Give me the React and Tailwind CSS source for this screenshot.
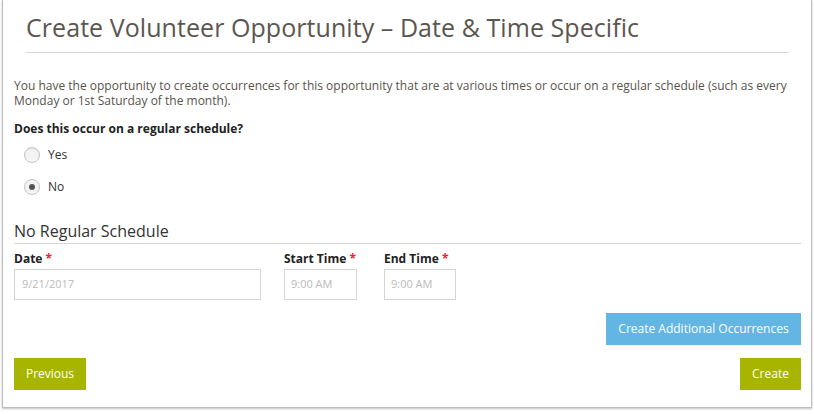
export default function App() {
  const body = { fontFamily: '"Open Sans", "DejaVu Sans", sans-serif' };
  return (
    <div className="w-[814px] h-[414px] bg-white overflow-hidden">
      <div className="ml-[2px] w-[810px] h-[408px] bg-white border-x border-b border-[#bdbdbd] shadow-[0_1px_2px_rgba(0,0,0,0.25)] relative" style={body}>
        <div className="pl-[23px] pr-[22px] pt-[11px]">
          <h1 className="text-[25px] leading-[32px] text-[#5c5650] tracking-[0.06px]">
            Create Volunteer Opportunity – Date &amp; Time Specific
          </h1>
          <div className="mt-[9px] h-px bg-[#d6d6d6]" />
        </div>
        <div className="pl-[11px] pr-[10px]">
          <p className="mt-[25px] text-[12px] leading-[15px] text-[#5a534c]">
            You have the opportunity to create occurrences for this opportunity that are at various times or occur on a regular schedule (such as every Monday or 1st Saturday of the month).
          </p>
          <div className="mt-[13px] text-[12px] leading-[15px] font-bold text-[#222]">Does this occur on a regular schedule?</div>
          <div className="mt-[11px] flex flex-col gap-[16px] pl-[10px]">
            <label className="flex items-center gap-[8px] text-[12px] leading-[16px] text-[#333]">
              <span className="w-[16px] h-[16px] rounded-full border border-[#c4c4c4] bg-[#f3f3f3] shadow-[inset_0_1px_1px_rgba(0,0,0,0.08)]" />
              Yes
            </label>
            <label className="flex items-center gap-[8px] text-[12px] leading-[16px] text-[#333]">
              <span className="w-[16px] h-[16px] rounded-full border border-[#c4c4c4] bg-[#f3f3f3] flex items-center justify-center">
                <span className="w-[6px] h-[6px] rounded-full bg-[#555]" />
              </span>
              No
            </label>
          </div>
          <div className="mt-[26px] text-[16px] leading-[20px] text-[#333]">No Regular Schedule</div>
          <div className="mt-[2px] h-px bg-[#d6d6d6]" />
          <div className="mt-[7px] flex text-[12px]">
            <div className="w-[270px]">
              <div className="font-bold text-[#222] leading-[15px]">Date <span className="text-[#e23]">*</span></div>
              <div className="mt-[3px] w-[247px] h-[31px] border border-[#d4d4d4] px-[7px] flex items-center text-[#bbb] text-[11px]">9/21/2017</div>
            </div>
            <div className="w-[100px]">
              <div className="font-bold text-[#222] leading-[15px]">Start Time <span className="text-[#e23]">*</span></div>
              <div className="mt-[3px] w-[73px] h-[31px] border border-[#d4d4d4] px-[6px] flex items-center text-[#bbb] text-[11px] whitespace-nowrap">9:00 AM</div>
            </div>
            <div>
              <div className="font-bold text-[#222] leading-[15px]">End Time <span className="text-[#e23]">*</span></div>
              <div className="mt-[3px] w-[72px] h-[31px] border border-[#d4d4d4] px-[6px] flex items-center text-[#bbb] text-[11px] whitespace-nowrap">9:00 AM</div>
            </div>
          </div>
          <div className="mt-[13px] flex justify-end">
            <button className="w-[195px] h-[32px] bg-[#63b6e4] text-white text-[12px]">Create Additional Occurrences</button>
          </div>
          <div className="mt-[13px] flex justify-between">
            <button className="w-[72px] h-[32px] bg-[#a7b400] text-white text-[12px]">Previous</button>
            <button className="w-[61px] h-[32px] bg-[#a7b400] text-white text-[12px]">Create</button>
          </div>
        </div>
      </div>
    </div>
  );
}
